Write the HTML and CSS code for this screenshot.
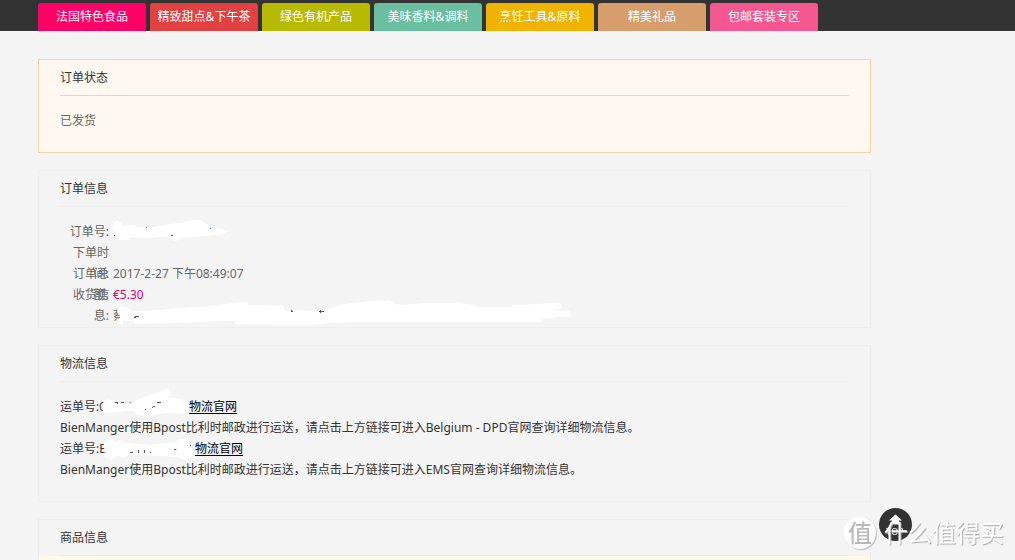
FILE: index.html
```html
<!DOCTYPE html>
<html lang="zh-CN">
<head>
<meta charset="utf-8">
<meta name="viewport" content="width=device-width, initial-scale=1">
<title>订单信息</title>
<link rel="stylesheet" href="styles.css">
</head>
<body>
<nav class="topnav" aria-label="商品分类">
  <a class="tab tab-french" href="#">法国特色食品</a>
  <a class="tab tab-dessert" href="#">精致甜点&amp;下午茶</a>
  <a class="tab tab-organic" href="#">绿色有机产品</a>
  <a class="tab tab-spice" href="#">美味香料&amp;调料</a>
  <a class="tab tab-cook" href="#">烹饪工具&amp;原料</a>
  <a class="tab tab-gift" href="#">精美礼品</a>
  <a class="tab tab-bundle" href="#">包邮套装专区</a>
</nav>
<main class="content">
  <section class="panel panel-status">
    <h2 class="panel-title">订单状态</h2>
    <p class="panel-body muted">已发货</p>
  </section>

  <section class="panel">
    <h2 class="panel-title">订单信息</h2>
    <dl class="panel-body order muted">
      <dt class="r1">订单号:</dt><dd class="r1"></dd>
      <dt class="r2">下单时间:</dt><dd class="r3">2017-2-27 下午08:49:07</dd>
      <dt class="r3">订单总额:</dt><dd class="r4 price">€5.30</dd>
      <dt class="r4">收货信息:</dt><dd class="r5">蔡</dd>
    </dl>
    <svg class="mask" width="833" height="157" viewBox="38 170 833 157" aria-hidden="true">
      <g transform="translate(105 215) scale(.3333)">
        <path fill="#fff" d="M20 38L28 20 38 17 48 24 52 36 66 30H88L92 37 150 36 190 28 228 24 262 15H288L296 25 306 26 318 40 355 42 366 50 360 58 310 62 225 68 220 76 206 78 200 68 180 65 130 69 76 67 64 75 44 74 32 64V50L20 44z"/>
        <path fill="#555" d="M198 60h6v3h-6zM27 60h3v3h-3z"/>
        <path fill="#4a8fc0" d="M123 36h3v3h-3zM315 39h3v3h-3z"/>
      </g>
      <g transform="translate(280 290) scale(.3333)">
        <path fill="#fff" d="M-489 59L-479 49H-463L-451 57-449 65-375 61-305 55-225 49-165 43-125 37H-99L-93 45 10 47 15 62 60 61 105 62 130 64 160 52 210 40 270 34 332 31 340 42 372 44 430 39 520 38 535 36 545 42 582 44 590 51H690L705 45 768 42 838 39 846 48 842 57 820 62 868 63 876 72 868 81 830 82 785 88 780 96H235L150 99 100 104-133 103-139 92-200 94-300 99-435 101-440 94-470 92-472 102-487 102-489 92-478 80-487 68z"/>
        <path fill="#555" d="M117 63h15v3h-15zM120 60h3v9h-3zM33 60h3v3h3v3h-6zM-438 81h6v3h-6zM-435 78h12v3h-12z"/>
      </g>
    </svg>
  </section>

  <section class="panel">
    <h2 class="panel-title">物流信息</h2>
    <div class="panel-body">
      <p><span class="waybill">运单号:0</span><a class="site" href="#">物流官网</a></p>
      <p>BienManger使用Bpost比利时邮政进行运送，请点击上方链接可进入Belgium - DPD官网查询详细物流信息。</p>
      <p><span class="waybill waybill-wide">运单号:E</span><a class="site" href="#">物流官网</a></p>
      <p>BienManger使用Bpost比利时邮政进行运送，请点击上方链接可进入EMS官网查询详细物流信息。</p>
    </div>
    <svg class="mask" width="833" height="157" viewBox="38 345 833 157" aria-hidden="true">
      <g transform="translate(95 386) scale(.3333)">
        <path fill="#fff" d="M24 50L38 40 52 42 62 54 118 50 124 42 205 12 222 10 230 20 216 34 252 38 278 50 282 78 262 84 215 80 165 90 130 88 112 74 30 82 22 72z"/>
        <path fill="#fff" d="M26 170L34 164 50 158 60 168 80 162 90 170 170 176 240 170 252 160H278L290 175 292 215 270 222 240 212 120 206H98L90 216 66 208 50 222 30 214z"/>
        <path fill="#555" d="M60 48h6v3h-6zM66 48h3v6h-3zM78 48h9v3h-9zM104 48h3v4h-3zM150 69h3v3h-3zM171 63h3v3h-3zM174 60h6v3h-6zM186 48h12v3h-12zM105 198h9v3h-9zM129 192h3v9h-3zM147 192h3v9h-3zM165 198h3v3h-3zM237 189h7v3h-7zM285 176h3v5h-3z"/>
      </g>
    </svg>
  </section>

  <section class="panel panel-goods">
    <h2 class="panel-title">商品信息</h2>
    <div class="goods-head"></div>
  </section>
</main>

<a class="to-top" href="#" aria-label="返回顶部">
  <svg width="34" height="34" viewBox="878 508 34 34" aria-hidden="true">
    <circle cx="895.500" cy="524.500" r="16.500" fill="#333"/>
    <path fill="#fff" d="M895.500 514.500l6.500 6h-3v4h-7v-4h-3z"/>
    <text class="top-text" x="895" y="535">TOP</text>
  </svg>
</a>
<div class="watermark"><span class="seal">值</span><span class="brand">什么值得买</span></div>
</body>
</html>
```

FILE: styles.css
```css
* { box-sizing: border-box; }
body {
  display: flex;
  flex-direction: column;
  margin: 0;
  min-height: 100vh;
  background: #f4f4f4;
  color: #333;
  font: 12px/21px "Noto Sans", "Noto Sans CJK SC", sans-serif;
}
h2, p, dl, dd { margin: 0; }
.topnav {
  display: flex;
  gap: 4px;
  padding: 3px 38px 0;
  background: #333;
}
.tab {
  width: 108px;
  height: 28px;
  line-height: 28px;
  border-radius: 3px 3px 0 0;
  color: #fff;
  text-align: center;
  text-decoration: none;
  white-space: nowrap;
}
.tab-french { background: #ff0066; }
.tab-dessert { background: #e24141; }
.tab-organic { background: #b8ba00; }
.tab-spice { background: #69bf9f; }
.tab-cook { background: #f0b400; }
.tab-gift { background: #d79e6b; }
.tab-bundle { background: #f55791; }
.content {
  flex: 1;
  display: flex;
  flex-direction: column;
  gap: 17px;
  margin: 28px 144px 0 38px;
}
.panel {
  position: relative;
  padding: 0 21px;
  border: 1px solid #eee;
}
.panel-status {
  border-color: #f4d3a5;
  background: #fff8f1;
}
.panel-goods {
  flex: 1;
  display: flex;
  flex-direction: column;
  border-bottom: 0;
}
.panel-title {
  height: 36px;
  border-bottom: 1px solid #eee;
  font-size: 12px;
  font-weight: 400;
  line-height: 36px;
}
.panel-status .panel-title { border-color: #f4d3a5; }
.panel-body { padding: 14px 0 21px; }
.muted { color: #666; }
.order {
  display: grid;
  grid-template-columns: 49px 1fr;
  grid-template-rows: repeat(5, 21px);
  column-gap: 4px;
  padding-bottom: 1px;
}
.order dt { grid-column: 1; text-align: right; }
.order dd { grid-column: 2; }
.r1 { grid-row: 1; }
.r2 { grid-row: 2; }
.r3 { grid-row: 3; }
.r4 { grid-row: 4; }
.r5 { grid-row: 5; }
.order .price { color: #e6006e; }
.mask {
  position: absolute;
  top: -1px;
  left: -1px;
  pointer-events: none;
}
.waybill { display: inline-block; width: 129px; }
.waybill-wide { width: 135px; }
.site {
  color: #000;
  text-decoration: underline;
  text-decoration-skip-ink: none;
  text-underline-offset: 2px;
}
.goods-head {
  flex: 1;
  margin: 0 -21px;
  background: #fff8ec;
}
.to-top {
  position: fixed;
  right: 103px;
  bottom: 18px;
  height: 34px;
}
.top-text {
  fill: #fff;
  font-size: 9px;
  text-anchor: middle;
}
.watermark {
  position: fixed;
  right: 11px;
  bottom: 11px;
  display: flex;
  align-items: center;
  gap: 8px;
  color: #fff;
}
.seal {
  width: 32px;
  height: 32px;
  border-radius: 50%;
  background: #fff;
  box-shadow: 1px 1px 1px #bbb;
  color: #bbb;
  font-size: 24px;
  font-weight: 500;
  line-height: 32px;
  text-align: center;
}
.brand {
  font-size: 24px;
  line-height: 32px;
  text-shadow: 1px 1px 1px #aaa;
}
```
